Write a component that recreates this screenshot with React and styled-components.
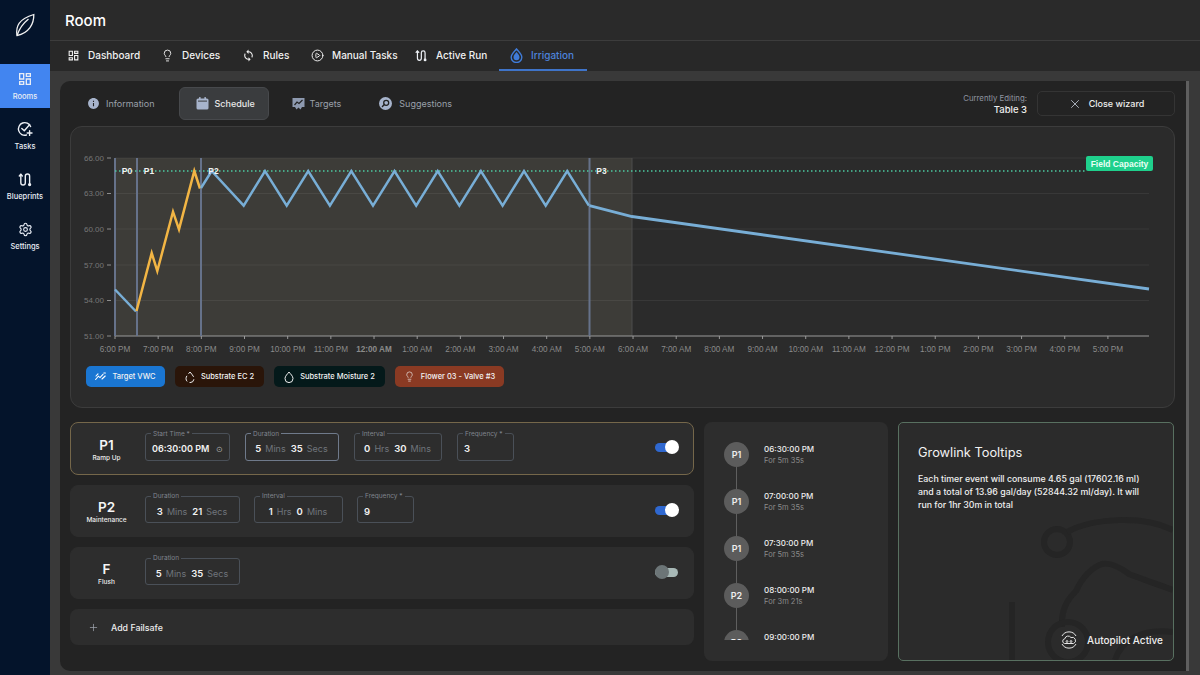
import React from 'react';
import styled, { createGlobalStyle } from 'styled-components';
import { Lightbulb, CirclePlay, Settings, X, Plus } from 'lucide-react';
import { MdOutlineDashboard, MdSync, MdInfo } from 'react-icons/md';

const GlobalStyle = createGlobalStyle`
  html, body { margin: 0; padding: 0; background: #393939; }
  body { font-family: Inter, "Noto Sans", sans-serif; color: #fff; }
  * { box-sizing: border-box; }
`;

const Shell = styled.div`
  display: flex;
  width: 1200px;
  height: 675px;
  overflow: hidden;
`;

const Sidebar = styled.aside`
  width: 50px;
  flex: none;
  background: #04142b;
  display: flex;
  flex-direction: column;
  align-items: stretch;
  gap: 6px;
`;

const LogoBox = styled.div`
  height: 58px;
  display: flex;
  align-items: center;
  justify-content: center;
  padding-bottom: 8px;
`;

const SideItem = styled.div`
  height: 44px;
  display: flex;
  flex-direction: column;
  align-items: center;
  justify-content: center;
  gap: 5px;
  font-size: 7.5px;
  font-weight: 500;
  color: #e8edf5;
  background: ${p => (p.$active ? '#4285f0' : 'transparent')};
`;

const Main = styled.div`
  flex: 1;
  min-width: 0;
  display: flex;
  flex-direction: column;
`;

const TitleBar = styled.header`
  height: 41px;
  flex: none;
  background: #2a2a2a;
  border-bottom: 1px solid #3c3c3c;
  padding: 0 15px;
  display: flex;
  align-items: center;
  font-size: 15px;
  font-weight: 500;
`;

const NavBar = styled.nav`
  height: 30px;
  flex: none;
  background: #282828;
  padding-left: 6px;
  display: flex;
`;

const NavItem = styled.div`
  width: ${p => p.$w}px;
  display: flex;
  align-items: center;
  gap: 8px;
  padding: 0 0 0 11px;
  font-size: 10px;
  font-weight: 500;
  white-space: nowrap;
  color: ${p => (p.$active ? '#4d83dc' : '#f1f1f1')};
  border-bottom: 2px solid ${p => (p.$active ? '#3f74c9' : 'transparent')};
  svg { flex: none; }
`;

const Content = styled.main`
  flex: 1;
  min-height: 0;
  padding: 10px 11px 4px 10px;
  background: #393939;
`;

const Panel = styled.section`
  height: 590px;
  background: #232323;
  border-radius: 10px 0 0 10px;
  border-right: 3px solid #5f5f5f;
  padding: 6px 11px 0 10px;
  display: flex;
  flex-direction: column;
`;

const TabsRow = styled.div`
  height: 33px;
  flex: none;
  display: flex;
  align-items: center;
  padding-left: 17px;
`;

const Tab = styled.div`
  height: 33px;
  width: ${p => (p.$active ? '90px' : 'auto')};
  display: flex;
  align-items: center;
  gap: ${p => p.$iconGap || 6}px;
  padding: ${p => (p.$active ? '0 0 0 16px' : '0')};
  margin-right: ${p => p.$gap}px;
  font-size: 9px;
  font-weight: ${p => (p.$active ? 500 : 400)};
  color: ${p => (p.$active ? '#e8e8e8' : '#9aa0aa')};
  background: ${p => (p.$active ? '#3a3c3e' : 'transparent')};
  border: ${p => (p.$active ? '1px solid #47494c' : '0')};
  border-radius: 6px;
`;

const EditingInfo = styled.div`
  margin-left: auto;
  margin-right: 10px;
  text-align: right;
  font-size: 7.8px;
  line-height: 11px;
  color: #8f95a0;
  strong {
    display: block;
    font-size: 9.5px;
    font-weight: 500;
    color: #eee;
  }
`;

const CloseButton = styled.div`
  width: 138px;
  height: 25px;
  display: flex;
  align-items: center;
  justify-content: center;
  gap: 7px;
  font-size: 9px;
  font-weight: 500;
  color: #eee;
  border: 1px solid #343434;
  border-radius: 5px;
`;

const ChartCard = styled.div`
  margin-top: 6px;
  height: 282px;
  flex: none;
  background: #2b2b2b;
  border: 1px solid #3c3c3c;
  border-radius: 12px;
  svg { display: block; }
`;

const ChipRow = styled.div`
  display: flex;
  gap: 10px;
  padding: 10px 0 0 15px;
`;

const Chip = styled.div`
  height: 21px;
  width: ${p => p.$w}px;
  display: flex;
  align-items: center;
  justify-content: center;
  gap: 6px;
  font-size: 7.5px;
  font-weight: 500;
  color: #f2f2f2;
  background: ${p => p.$bg};
  border-radius: 5px;
`;

const Lower = styled.div`
  margin-top: 14px;
  display: grid;
  grid-template-columns: 624px 184px 276px;
  gap: 10px;
  height: 239px;
`;

const Rows = styled.div`
  display: flex;
  flex-direction: column;
  gap: 10px;
`;

const Row = styled.div`
  height: ${p => (p.$active ? 53 : 52)}px;
  display: flex;
  align-items: center;
  flex: none;
  background: #2d2d2d;
  border: 1px solid ${p => (p.$active ? '#75674a' : '#2d2d2d')};
  border-radius: 8px;
  padding: 0 15px 2px 0;
`;

const PhaseLabel = styled.div`
  width: 71px;
  margin-right: 3px;
  flex: none;
  text-align: center;
  padding-top: 3px;
  font-size: 6.5px;
  line-height: 9px;
  font-weight: 500;
  color: #eee;
  strong {
    display: block;
    font-size: 13.5px;
    line-height: 18px;
    font-weight: 600;
    color: #f5f5f5;
  }
`;

const Fields = styled.div`
  display: flex;
  gap: ${p => p.$gap || 15}px;
`;

const Field = styled.fieldset`
  width: ${p => p.$w}px;
  height: 31px;
  margin: -5px 0 0;
  padding: 0 6px;
  min-width: 0;
  display: flex;
  align-items: center;
  justify-content: ${p => (p.$left ? 'flex-start' : 'center')};
  gap: 4px;
  font-size: 9.5px;
  font-weight: 600;
  white-space: nowrap;
  color: #f2f2f2;
  border: 1px solid ${p => (p.$active ? '#6f7a8b' : '#4a5058')};
  border-radius: 3px;
  legend {
    padding: 0 2px;
    margin-left: -1px;
    font-size: 6.5px;
    line-height: 8px;
    font-weight: 400;
    color: #80858d;
  }
  span { color: #70757c; font-size: 9px; font-weight: 400; margin-right: 1px; }
  i { color: #aaa; font-style: normal; font-size: 8px; margin-left: 3px; font-weight: 400; }
`;

const StartValue = styled.b`
  font-size: 9px;
  font-weight: 600;
`;

const Toggle = styled.div`
  position: relative;
  margin-left: auto;
  width: 23px;
  height: 9px;
  border-radius: 5px;
  background: ${p => (p.$on ? '#2f68d0' : '#a7b8b6')};
  &::after {
    content: '';
    position: absolute;
    top: -3px;
    left: ${p => (p.$on ? '10px' : '0')};
    width: 14px;
    height: 14px;
    border-radius: 50%;
    background: ${p => (p.$on ? '#fff' : '#6c7577')};
  }
`;

const AddRow = styled.div`
  height: 36px;
  flex: none;
  display: flex;
  align-items: center;
  gap: 12px;
  padding-left: 18px;
  font-size: 8.8px;
  font-weight: 500;
  color: #eee;
  background: #2d2d2d;
  border-radius: 8px;
  svg { color: #a5abb5; }
`;

const TimelineCard = styled.div`
  background: #2d2d2d;
  border-radius: 8px;
  padding: 20px 0 0 20px;
`;

const TimelineList = styled.div`
  height: 198px;
  overflow: hidden;
`;

const TimelineItem = styled.div`
  position: relative;
  height: 47px;
  display: flex;
  gap: 15px;
  ${p => !p.$last && `
    &::before {
      content: '';
      position: absolute;
      left: 12px;
      top: 20px;
      width: 1px;
      height: 40px;
      background: #5f5f5f;
    }
  `}
`;

const Node = styled.div`
  position: relative;
  width: 25px;
  height: 25px;
  flex: none;
  border-radius: 50%;
  background: #5c5c5c;
  display: flex;
  align-items: center;
  justify-content: center;
  font-size: 9px;
  font-weight: 600;
  color: #eee;
`;

const TimeText = styled.div`
  padding-top: 1px;
  font-size: 8px;
  line-height: 12px;
  font-weight: 500;
  color: #eee;
  small {
    display: block;
    font-size: 7.5px;
    font-weight: 400;
    color: #8b8b8b;
  }
`;

const TipCard = styled.div`
  position: relative;
  overflow: hidden;
  background: #2b2b2b;
  border: 1px solid #587060;
  border-radius: 5px;
  padding: 21px 20px 21px 19px;
  h3 {
    margin: 0 0 10px;
    font-size: 12.8px;
    line-height: 18px;
    font-weight: 400;
    color: #f2f2f2;
  }
  p {
    position: relative;
    margin: 0;
    font-size: 8.8px;
    line-height: 13px;
    font-weight: 500;
    color: #f0f0f0;
  }
`;

const Watermark = styled.svg`
  position: absolute;
  right: 0;
  bottom: 0;
`;

const Autopilot = styled.div`
  position: absolute;
  right: 10px;
  bottom: 10px;
  display: flex;
  align-items: center;
  gap: 8px;
  font-size: 10px;
  font-weight: 500;
  color: #eee;
`;

const LeafLogo = () => (
  <svg width="20" height="24" viewBox="0 0 20 24" fill="none" stroke="#f2f2f2" strokeWidth="1.3" strokeLinejoin="miter">
    <path d="M2 22.5 C0.5 13 4 6 18.8 1.5 C19 11 14 20 2 22.5 Z" />
    <path d="M2 22.5 C4.5 15 8.5 10 13.5 6" />
  </svg>
);

const TaskIcon = () => (
  <svg width="16" height="16" viewBox="0 0 16 16" fill="none" stroke="#eef1f6" strokeWidth="1.4" strokeLinecap="round" strokeLinejoin="round">
    <path d="M13.6 5.6 A6.3 6.3 0 1 0 9.5 14" />
    <path d="M4.8 7.4 L7.3 9.8 L12.6 3.6" />
    <path d="M12.6 9.6 V14.4 M10.2 12 H15" />
  </svg>
);

const RouteIcon = ({ size = 15, color = '#eef1f6' }) => (
  <svg width={size} height={size} viewBox="0 0 16 16" fill="none" stroke={color} strokeWidth="1.5" strokeLinecap="round" strokeLinejoin="round">
    <path d="M3 2.5 V11.5 A2.4 2.4 0 0 0 7.8 11.5 V4.5 A2.3 2.3 0 0 1 12.4 4.5 V12.4" />
    <path d="M1.4 4.2 L3 2.3 L4.6 4.2" />
    <circle cx="12.4" cy="13.4" r="1" fill={color} />
  </svg>
);

const DropIcon = () => (
  <svg width="13" height="15" viewBox="0 0 13 15">
    <path d="M6.5 1 C8.5 3.6 11.8 6 11.8 9.2 A5.3 5.3 0 0 1 1.2 9.2 C1.2 6 4.5 3.6 6.5 1 Z" fill="none" stroke="#3f7bd8" strokeWidth="1.4" />
    <path d="M6.5 4 C7.8 5.6 9.5 7.3 9.5 9.2 A3 3 0 0 1 3.5 9.2 C3.5 7.3 5.2 5.6 6.5 4 Z" fill="#3f7bd8" />
  </svg>
);

const CalendarIcon = () => (
  <svg width="13" height="13" viewBox="0 0 13 13" fill="#a7b4cc">
    <rect x="0.5" y="1.5" width="12" height="11" rx="1.6" />
    <rect x="3" y="0" width="1.6" height="3" rx="0.6" />
    <rect x="8.4" y="0" width="1.6" height="3" rx="0.6" />
    <rect x="2" y="3.6" width="9" height="1" fill="#3a3c3e" />
  </svg>
);

const TargetsIcon = () => (
  <svg width="13" height="13" viewBox="0 0 13 13">
    <path d="M0.5 1 H12.5 V10 L10 10 L8.5 12.5 L6.5 10.5 L4.5 12.5 L3 10 L0.5 10 Z" fill="#8e9ab0" />
    <path d="M2.5 8 L5 5 L7 6.5 L10.5 3" fill="none" stroke="#232323" strokeWidth="1.2" />
  </svg>
);

const SearchDiscIcon = () => (
  <svg width="13" height="13" viewBox="0 0 13 13">
    <circle cx="6.5" cy="6.5" r="6.5" fill="#a7b4cc" />
    <circle cx="7.2" cy="5.8" r="2.5" fill="none" stroke="#232323" strokeWidth="1.3" />
    <path d="M5.4 7.6 L3.4 9.6" stroke="#232323" strokeWidth="1.4" strokeLinecap="round" />
  </svg>
);

const TrendIcon = () => (
  <svg width="11" height="9" viewBox="0 0 11 9" fill="none" stroke="#fff" strokeWidth="1.1" strokeLinecap="round">
    <path d="M0.6 7.5 L3.4 4.2 L5 5.6 L8 2.4" />
    <path d="M1 4 L3 1.8 M7 7 L10.2 4 M8.8 1 L10.4 1" />
  </svg>
);

const Droplet = ({ dashed }) => (
  <svg width="10" height="12" viewBox="0 0 10 12" fill="none" stroke="#f0f0f0" strokeWidth="1" strokeDasharray={dashed ? '6 2.5' : undefined}>
    <path d="M5 1 C6.4 3 9 5 9 7.6 A4 4 0 0 1 1 7.6 C1 5 3.6 3 5 1 Z" />
  </svg>
);

const CloudBadge = () => (
  <svg width="20" height="20" viewBox="0 0 20 20" fill="none" stroke="#e6e6e6" strokeWidth="1">
    <path d="M3 6 A8 8 0 0 1 17 6 M17 14 A8 8 0 0 1 3 14" />
    <path d="M5.5 13.5 A2.4 2.4 0 0 1 5.8 8.8 A3.4 3.4 0 0 1 12 7.6 A3 3 0 0 1 14.6 13.5 Z" />
    <circle cx="8" cy="11.5" r="0.9" />
    <circle cx="12" cy="11.5" r="0.9" />
  </svg>
);

const hour = 43.17;
const xLabels = ['6:00 PM', '7:00 PM', '8:00 PM', '9:00 PM', '10:00 PM', '11:00 PM', '12:00 AM', '1:00 AM', '2:00 AM', '3:00 AM', '4:00 AM', '5:00 AM', '6:00 AM', '7:00 AM', '8:00 AM', '9:00 AM', '10:00 AM', '11:00 AM', '12:00 PM', '1:00 PM', '2:00 PM', '3:00 PM', '4:00 PM', '5:00 PM'];
const yLabels = [['66.00', 158], ['63.00', 193.5], ['60.00', 229], ['57.00', 265], ['54.00', 300.5], ['51.00', 336]];
const phaseLines = [115, 137, 201, 589.5];
const phaseTags = [['P0', 127, 174], ['P1', 149, 173.5], ['P2', 213.5, 173.5], ['P3', 601.5, 173.5]];

const ramp = '136.5,311 151.7,253 157.3,271 173,211.7 179,229.3 194.3,171 200,188.5';
const maintenance = (() => {
  const pts = ['201,188', '211.7,171', '243.7,205.7'];
  for (let i = 0; i < 8; i += 1) {
    pts.push(`${(265 + i * hour).toFixed(1)},171`);
    pts.push(`${(286.7 + i * hour).toFixed(1)},205.7`);
  }
  return pts.join(' ');
})();

const Chart = () => (
  <svg width="1102" height="229" viewBox="71 127 1102 229" fontFamily="Liberation Sans, Arial, sans-serif">
    {yLabels.map(([label, y]) => (
      <g key={label}>
        {y !== 336 && <line x1="115" x2="1149" y1={y} y2={y} stroke="#383838" strokeWidth="1" />}
        <line x1="107" x2="111" y1={y} y2={y} stroke="#8d8d8d" strokeWidth="1" />
        <text x="104" y={y + 2.5} textAnchor="end" fontSize="8" fill="#777">{label}</text>
      </g>
    ))}
    <rect x="115" y="158" width="517" height="178" fill="#fff0c8" fillOpacity="0.085" />
    <line x1="632" x2="632" y1="158" y2="336" stroke="#4c4c4c" />
    {xLabels.map((label, i) => (
      <g key={label}>
        <line x1={115 + i * hour} x2={115 + i * hour} y1="336" y2="339" stroke="#9a9a9a" />
        <text
          x={115 + i * hour}
          y="351.5"
          textAnchor="middle"
          fontSize="8.2"
          fontWeight={label === '12:00 AM' ? 700 : 400}
          fill="#8a8a8a"
        >
          {label}
        </text>
      </g>
    ))}
    <line x1="115" x2="1149" y1="336" y2="336" stroke="#9a9a9a" strokeWidth="1" />
    {phaseLines.map(x => (
      <line key={x} x1={x} x2={x} y1="158" y2="336" stroke="#66728a" strokeWidth="2" />
    ))}
    <line x1="115" x2="1086" y1="171" y2="171" stroke="#4cc9a0" strokeWidth="1.5" strokeDasharray="1.5 2.5" />
    <polyline points="115,289.5 136,311.5" fill="none" stroke="#78aed6" strokeWidth="2.5" />
    <polyline points={ramp} fill="none" stroke="#f2b544" strokeWidth="2.5" strokeLinejoin="miter" />
    <polyline points={maintenance} fill="none" stroke="#78aed6" strokeWidth="2.5" />
    <polyline points="589.5,205.7 632,216.5 1149,289" fill="none" stroke="#78aed6" strokeWidth="2.8" />
    {phaseTags.map(([label, x, y]) => (
      <text key={label} x={x} y={y} textAnchor="middle" fontSize="8.5" fontWeight="700" fill="#f2f2f2">{label}</text>
    ))}
    <rect x="1086" y="156" width="67" height="15" rx="2" fill="#1fd08c" />
    <text x="1119.5" y="166.7" textAnchor="middle" fontSize="8.5" fontWeight="700" fill="#eafff6">Field Capacity</text>
  </svg>
);

const navItems = [
  { label: 'Dashboard', width: 94, icon: <MdOutlineDashboard size={13} /> },
  { label: 'Devices', width: 81, icon: <Lightbulb size={13} strokeWidth={1.7} /> },
  { label: 'Rules', width: 69, icon: <MdSync size={13} /> },
  { label: 'Manual Tasks', width: 104, icon: <CirclePlay size={13} strokeWidth={1.8} /> },
  { label: 'Active Run', width: 95, icon: <RouteIcon size={13} /> },
  { label: 'Irrigation', width: 88, icon: <DropIcon />, active: true },
];

const timeline = [
  ['P1', '06:30:00 PM', 'For 5m 35s'],
  ['P1', '07:00:00 PM', 'For 5m 35s'],
  ['P1', '07:30:00 PM', 'For 5m 35s'],
  ['P2', '08:00:00 PM', 'For 3m 21s'],
  ['P2', '09:00:00 PM'],
];

const Pair = ({ a, b, aUnit, bUnit }) => (
  <>
    {a}<span>{aUnit}</span>{b}<span>{bUnit}</span>
  </>
);

export default function App() {
  return (
    <Shell>
      <GlobalStyle />
      <Sidebar>
        <LogoBox><LeafLogo /></LogoBox>
        <SideItem $active><MdOutlineDashboard size={16} />Rooms</SideItem>
        <SideItem><TaskIcon />Tasks</SideItem>
        <SideItem><RouteIcon />Blueprints</SideItem>
        <SideItem><Settings size={15} strokeWidth={1.8} />Settings</SideItem>
      </Sidebar>
      <Main>
        <TitleBar>Room</TitleBar>
        <NavBar>
          {navItems.map(item => (
            <NavItem key={item.label} $w={item.width} $active={item.active}>
              {item.icon}
              {item.label}
            </NavItem>
          ))}
        </NavBar>
        <Content>
          <Panel>
            <TabsRow>
              <Tab $gap={24}><MdInfo size={13} color="#a7b4cc" />Information</Tab>
              <Tab $active $gap={23}><CalendarIcon />Schedule</Tab>
              <Tab $gap={38} $iconGap={5}><TargetsIcon />Targets</Tab>
              <Tab $gap={0} $iconGap={7}><SearchDiscIcon />Suggestions</Tab>
              <EditingInfo>
                Currently Editing:
                <strong>Table 3</strong>
              </EditingInfo>
              <CloseButton><X size={14} strokeWidth={1.4} color="#c4cbd8" />Close wizard</CloseButton>
            </TabsRow>

            <ChartCard>
              <Chart />
              <ChipRow>
                <Chip $w={79} $bg="#1a76d2"><TrendIcon />Target VWC</Chip>
                <Chip $w={89} $bg="#2a1509"><Droplet dashed />Substrate EC 2</Chip>
                <Chip $w={111} $bg="#04191a"><Droplet />Substrate Moisture 2</Chip>
                <Chip $w={109} $bg="#8a3a23"><Lightbulb size={11} strokeWidth={1.4} />Flower 03 - Valve #3</Chip>
              </ChipRow>
            </ChartCard>

            <Lower>
              <Rows>
                <Row $active>
                  <PhaseLabel><strong>P1</strong>Ramp Up</PhaseLabel>
                  <Fields>
                    <Field $w={85} $left>
                      <legend>Start Time *</legend>
                      <StartValue>06:30:00 PM</StartValue><i>⊙</i>
                    </Field>
                    <Field $w={94} $active>
                      <legend>Duration</legend>
                      <Pair a="5" aUnit="Mins" b="35" bUnit="Secs" />
                    </Field>
                    <Field $w={88}>
                      <legend>Interval</legend>
                      <Pair a="0" aUnit="Hrs" b="30" bUnit="Mins" />
                    </Field>
                    <Field $w={57} $left>
                      <legend>Frequency *</legend>
                      3
                    </Field>
                  </Fields>
                  <Toggle $on />
                </Row>
                <Row>
                  <PhaseLabel><strong>P2</strong>Maintenance</PhaseLabel>
                  <Fields $gap={14}>
                    <Field $w={95}>
                      <legend>Duration</legend>
                      <Pair a="3" aUnit="Mins" b="21" bUnit="Secs" />
                    </Field>
                    <Field $w={89}>
                      <legend>Interval</legend>
                      <Pair a="1" aUnit="Hrs" b="0" bUnit="Mins" />
                    </Field>
                    <Field $w={57} $left>
                      <legend>Frequency *</legend>
                      9
                    </Field>
                  </Fields>
                  <Toggle $on />
                </Row>
                <Row>
                  <PhaseLabel><strong>F</strong>Flush</PhaseLabel>
                  <Fields>
                    <Field $w={95}>
                      <legend>Duration</legend>
                      <Pair a="5" aUnit="Mins" b="35" bUnit="Secs" />
                    </Field>
                  </Fields>
                  <Toggle />
                </Row>
                <AddRow><Plus size={11} strokeWidth={1.5} />Add Failsafe</AddRow>
              </Rows>

              <TimelineCard>
                <TimelineList>
                  {timeline.map(([phase, time, length], i) => (
                    <TimelineItem key={time} $last={i === timeline.length - 1}>
                      <Node>{phase}</Node>
                      <TimeText>
                        {time}
                        {length && <small>{length}</small>}
                      </TimeText>
                    </TimelineItem>
                  ))}
                </TimelineList>
              </TimelineCard>

              <TipCard>
                <Watermark width="180" height="150" viewBox="0 0 180 150" fill="none" stroke="#252525" strokeWidth="6">
                  <circle cx="64" cy="32" r="13" />
                  <path d="M74 22 C100 8 150 5 180 20" />
                  <path d="M19 150 V92" />
                  <path d="M69 117 C68 100 74 90 83 81 C90 66 98 58 109 54 C118 52 128 58 136 64 C146 68 158 72 180 80" />
                  <circle cx="75" cy="132" r="20" />
                  <path d="M122 150 C128 130 150 118 180 122" />
                </Watermark>
                <h3>Growlink Tooltips</h3>
                <p>Each timer event will consume 4.65 gal (17602.16 ml) and a total of 13.96 gal/day (52844.32 ml/day). It will run for 1hr 30m in total</p>
                <Autopilot><CloudBadge />Autopilot Active</Autopilot>
              </TipCard>
            </Lower>
          </Panel>
        </Content>
      </Main>
    </Shell>
  );
}
